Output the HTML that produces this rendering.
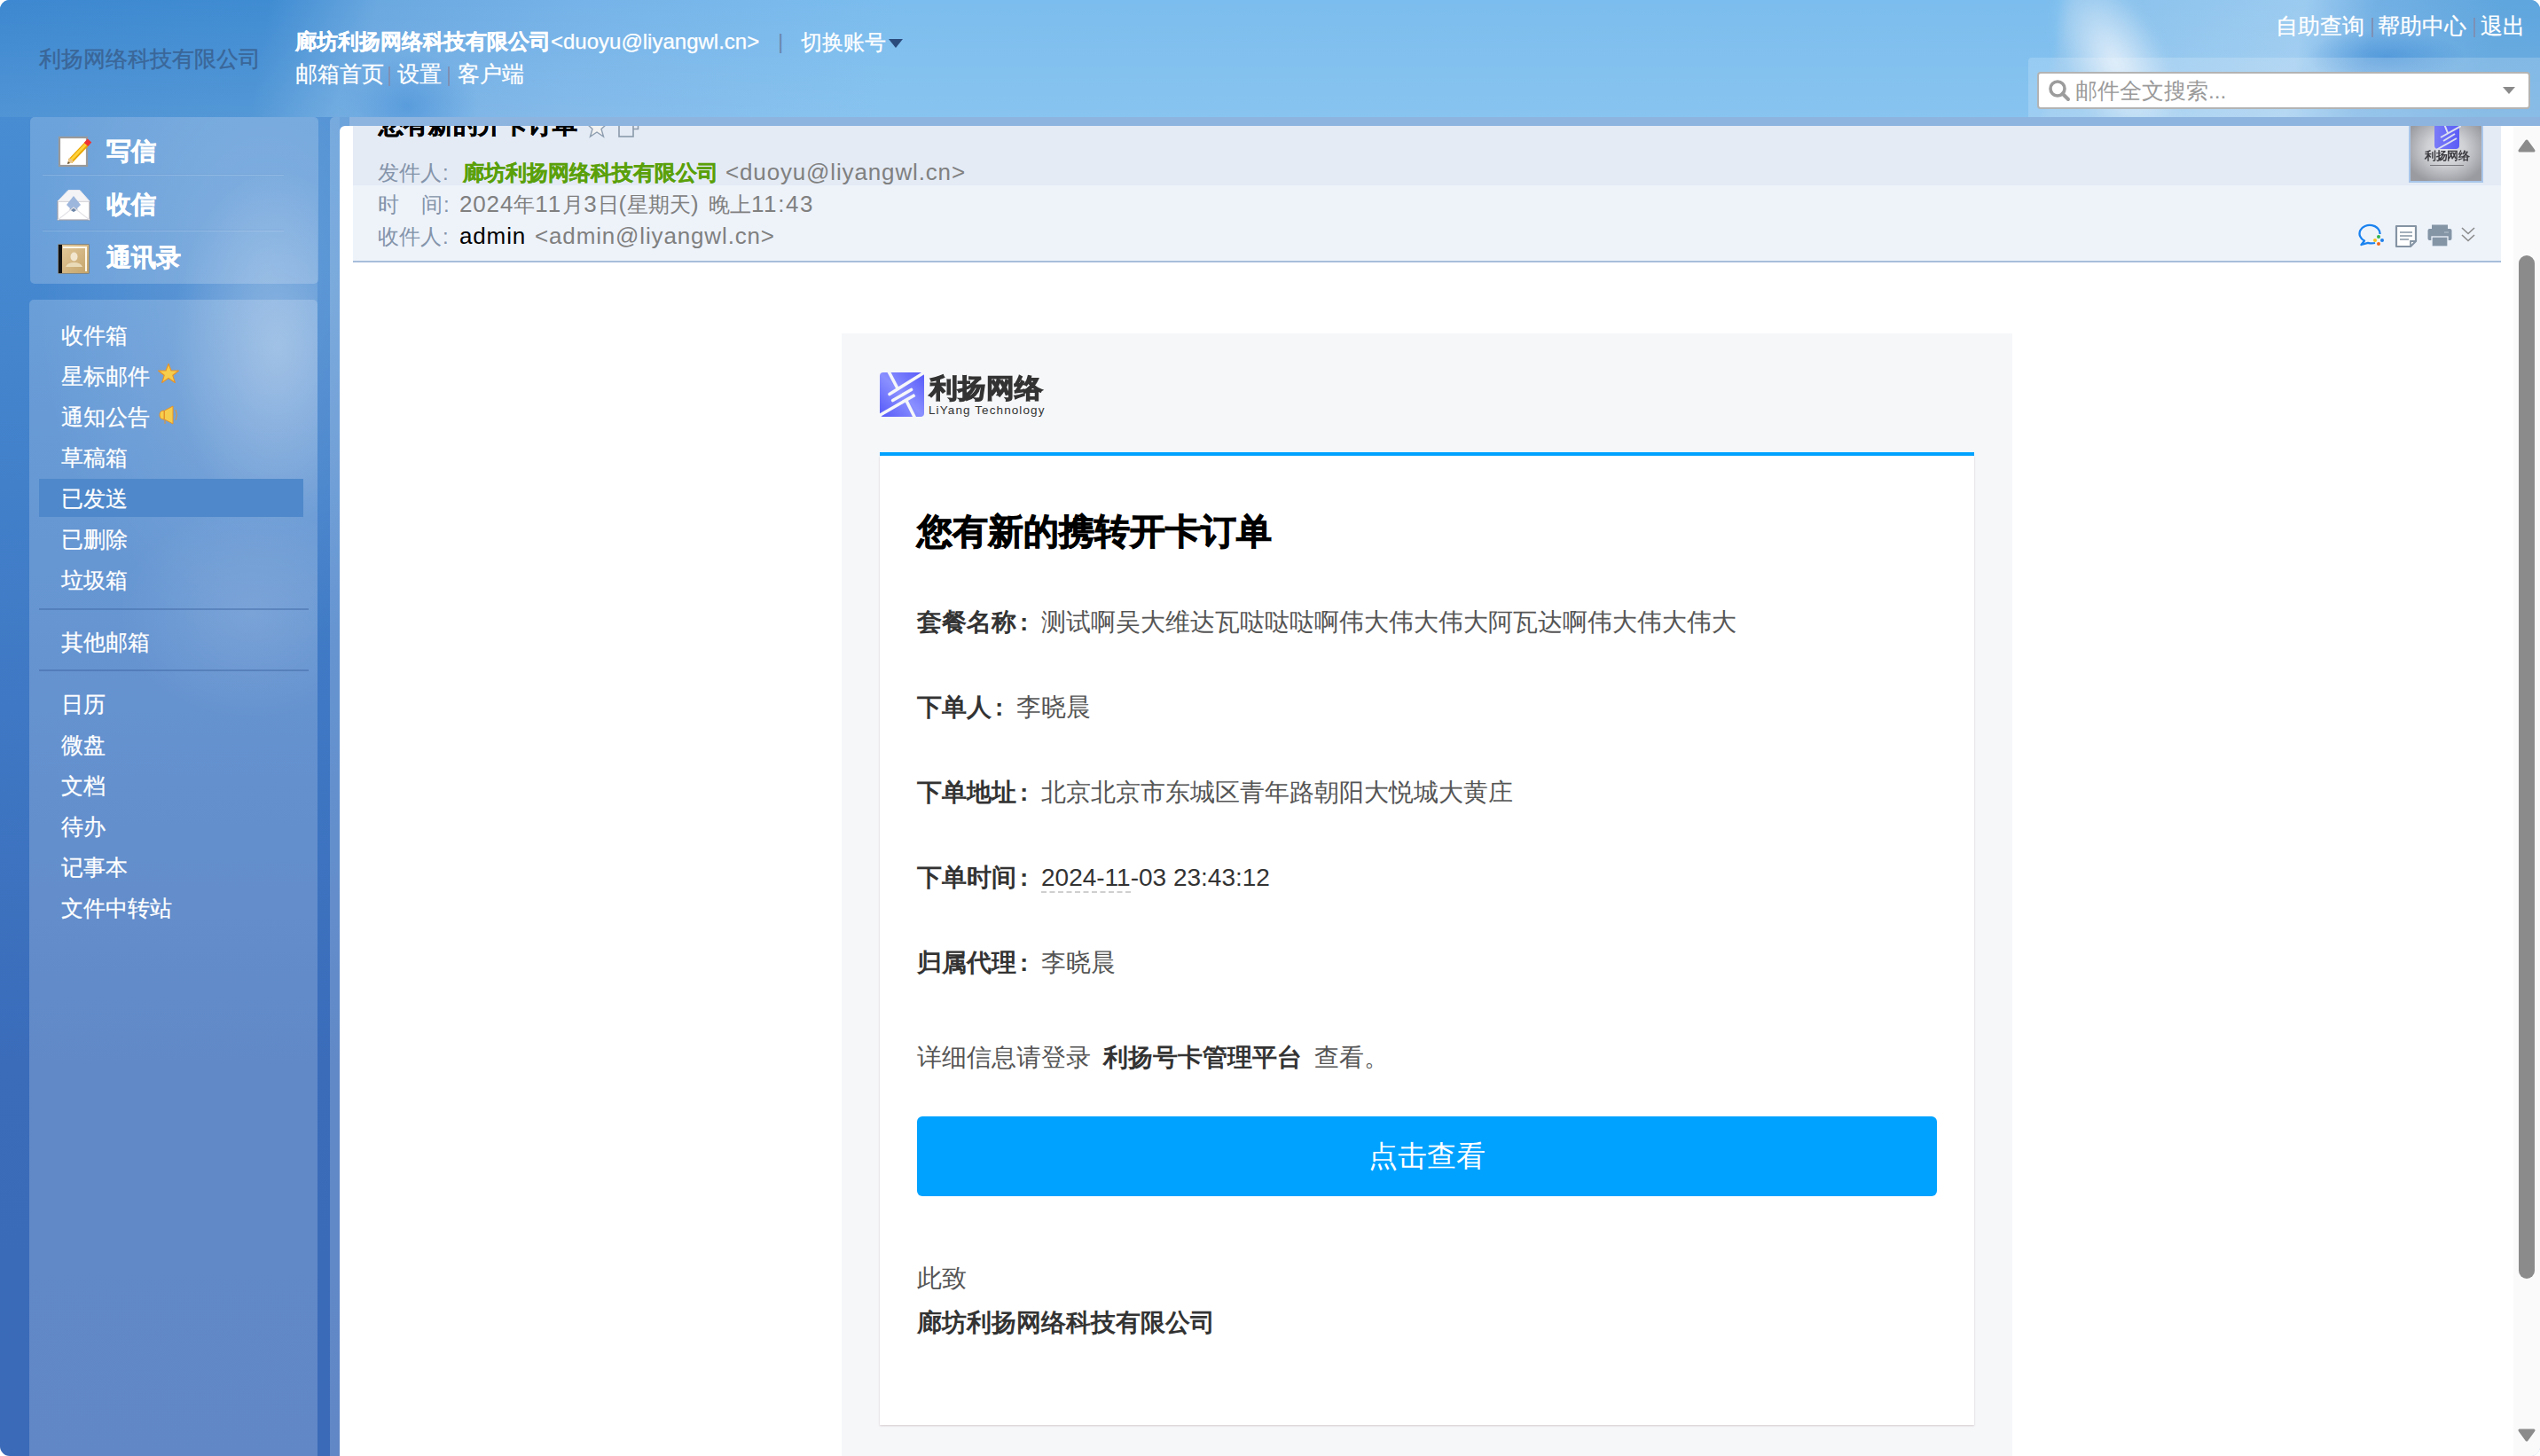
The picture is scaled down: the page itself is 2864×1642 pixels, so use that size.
<!DOCTYPE html>
<html><head><meta charset="utf-8">
<style>
*{margin:0;padding:0;box-sizing:border-box}
html,body{width:2864px;height:1642px;overflow:hidden;background:#fff}
body{font-family:"Liberation Sans",sans-serif;position:relative}
.a{position:absolute;white-space:nowrap}
#app{position:absolute;left:0;top:0;width:2864px;height:1642px;border-radius:11px;overflow:hidden;
 background:linear-gradient(180deg,#4a8fd4 0px,#4588d0 300px,#3f78c4 800px,#3a6cba 1200px,#3a6ab8 1642px)}
#hdr{position:absolute;left:0;top:0;width:2864px;height:132px;overflow:hidden;
 background:
  radial-gradient(ellipse 90px 30px at 2690px 64px,rgba(50,130,210,0.5),rgba(50,130,210,0) 100%),
  radial-gradient(ellipse 80px 60px at 460px 120px,rgba(50,130,210,0.45),rgba(50,130,210,0) 100%),
  linear-gradient(180deg,rgba(255,255,255,0) 0px,rgba(255,255,255,0.1) 132px),
  linear-gradient(100deg,#3d88d0 0px,#408cd2 300px,#6aa8e0 420px,#76b3e8 650px,#7bbdee 1000px,#7bbdee 2288px,#86c0ec 2300px,#9ccbf0 2560px,#72b0e4 2640px,#5fa6de 2780px,#5fa6df 2864px)}
#streak{position:absolute;left:2330px;top:-40px;width:110px;height:220px;transform:rotate(-28deg);
 background:radial-gradient(ellipse 50% 50% at 50% 50%,rgba(225,238,250,0.95),rgba(225,238,250,0) 100%);filter:blur(6px)}
.t24{font-size:24.5px;line-height:24px}
.t28{font-size:28px;line-height:28px}
.w{color:#fff;-webkit-text-stroke:0.25px #fff}
.sep{color:#86a6cc}
.v{font-size:26px;line-height:1px;letter-spacing:0.85px}
.c{display:inline-block;width:24px;padding-left:1px}
.c2{display:inline-block;width:28px;padding-left:4px}
</style></head><body>
<div id="app">
 <div id="hdr"><div id="streak"></div></div>
 <!-- header texts -->
 <div class="a t24" style="left:44px;top:55px;color:#3a6698;-webkit-text-stroke:0.35px #3a6698">利扬网络科技有限公司</div>
 <div class="a t24 w" style="left:333px;top:35px;font-size:24px"><b style="-webkit-text-stroke:0.3px #fff">廊坊利扬网络科技有限公司</b>&lt;duoyu@liyangwl.cn&gt;</div>
 <div class="a t24" style="left:877px;top:35px;color:#6a88b0">|</div>
 <div class="a t24 w" style="left:903px;top:36px;font-size:24px">切换账号</div>
 <div class="a" style="left:1002px;top:44px;width:0;height:0;border-left:8.5px solid transparent;border-right:8.5px solid transparent;border-top:10px solid #2b4b7c"></div>
 <div class="a t24 w" style="left:333px;top:72px">邮箱首页</div>
 <div class="a" style="left:438px;top:75px;width:2px;height:22px;background:#7d90b5"></div>
 <div class="a t24 w" style="left:448px;top:72px">设置</div>
 <div class="a" style="left:505px;top:75px;width:2px;height:22px;background:#7d90b5"></div>
 <div class="a t24 w" style="left:516px;top:72px">客户端</div>
 <div class="a t24 w" style="left:2566px;top:18px">自助查询</div>
 <div class="a" style="left:2674px;top:20px;width:2px;height:22px;background:#7d90b5"></div>
 <div class="a t24 w" style="left:2681px;top:18px">帮助中心</div>
 <div class="a" style="left:2789px;top:20px;width:2px;height:22px;background:#7d90b5"></div>
 <div class="a t24 w" style="left:2797px;top:18px">退出</div>
 <!-- search -->
 <div class="a" style="left:2287px;top:65px;width:577px;height:67px;background:rgba(255,255,255,0.18);border-radius:4px 0 0 0"></div>
 <div class="a" style="left:2297px;top:81px;width:556px;height:42px;background:#fff;border:2px solid #b3b3b3;border-radius:4px"></div>
 <div class="a t24" style="left:2340px;top:91px;color:#9a9a9a">邮件全文搜索...</div>

 <!-- sidebar -->
 <div class="a" style="left:0;top:132px;width:383px;height:800px;background:radial-gradient(ellipse 260px 420px at 300px 180px,rgba(255,255,255,0.16),rgba(255,255,255,0) 100%)"></div>
 <div class="a" style="left:34px;top:132px;width:325px;height:188px;background:rgba(255,255,255,0.2);border-radius:5px"></div>
 <div class="a" style="left:33px;top:338px;width:325px;height:1320px;background:rgba(255,255,255,0.2);border-radius:5px"></div>
 <div class="a" style="left:33px;top:132px;width:325px;height:800px;background:radial-gradient(ellipse 120px 200px at 280px 260px,rgba(255,255,255,0.28),rgba(255,255,255,0) 100%),radial-gradient(ellipse 150px 120px at 250px 560px,rgba(255,255,255,0.12),rgba(255,255,255,0) 100%)"></div>
 <div class="a" style="left:48px;top:196px;width:272px;height:1px;background:rgba(60,110,180,0.12)"></div>
 <div class="a" style="left:48px;top:197px;width:272px;height:1px;background:rgba(255,255,255,0.18)"></div>
 <div class="a" style="left:48px;top:259px;width:272px;height:1px;background:rgba(60,110,180,0.12)"></div>
 <div class="a" style="left:48px;top:260px;width:272px;height:1px;background:rgba(255,255,255,0.18)"></div>
 <div class="a" style="left:120px;top:157px;font-size:28px;line-height:28px;font-weight:bold;color:#fff;-webkit-text-stroke:0.5px #fff">写信</div>
 <div class="a" style="left:120px;top:217px;font-size:28px;line-height:28px;font-weight:bold;color:#fff;-webkit-text-stroke:0.5px #fff">收信</div>
 <div class="a" style="left:120px;top:277px;font-size:28px;line-height:28px;font-weight:bold;color:#fff;-webkit-text-stroke:0.5px #fff">通讯录</div>

 <div class="a" style="left:44px;top:540px;width:298px;height:43px;background:#4f89cb"></div>
 <div class="a" style="left:44px;top:686px;width:304px;height:2px;background:rgba(60,100,160,0.45)"></div>
 <div class="a" style="left:44px;top:755px;width:304px;height:2px;background:rgba(60,100,160,0.45)"></div>
 <div class="a t24 w" style="left:69px;top:367px">收件箱</div>
 <div class="a t24 w" style="left:69px;top:413px">星标邮件</div>
 <div class="a t24 w" style="left:69px;top:459px">通知公告</div>
 <div class="a t24 w" style="left:69px;top:505px">草稿箱</div>
 <div class="a t24 w" style="left:69px;top:551px">已发送</div>
 <div class="a t24 w" style="left:69px;top:597px">已删除</div>
 <div class="a t24 w" style="left:69px;top:643px">垃圾箱</div>
 <div class="a t24 w" style="left:69px;top:713px">其他邮箱</div>
 <div class="a t24 w" style="left:69px;top:783px">日历</div>
 <div class="a t24 w" style="left:69px;top:829px">微盘</div>
 <div class="a t24 w" style="left:69px;top:875px">文档</div>
 <div class="a t24 w" style="left:69px;top:921px">待办</div>
 <div class="a t24 w" style="left:69px;top:967px">记事本</div>
 <div class="a t24 w" style="left:69px;top:1013px">文件中转站</div>

 <!-- main frame -->
 <div class="a" style="left:372px;top:132px;width:2492px;height:1510px;background:rgba(255,255,255,0.2);border-radius:5px 0 0 0"></div>
 <div class="a" style="left:383px;top:142px;width:2481px;height:1500px;background:#fff;border-radius:6px 0 0 0"></div>
 <div class="a" style="left:394px;top:132px;width:2470px;height:10px;background:#8cb4df"></div>
 <!-- email header -->
 <div class="a" style="left:398px;top:142px;width:2422px;height:67px;background:#e4ebf5"></div>
 <div class="a" style="left:398px;top:209px;width:2422px;height:85px;background:#eef3fa"></div>
 <div class="a" style="left:398px;top:294px;width:2422px;height:2px;background:#a7bedb"></div>
 <div class="a t24" style="left:426px;top:183px;color:#8494aa;font-size:24px">发件人<span class="c">:</span></div>
 <div class="a t24" style="left:522px;top:183px;color:#5aa00a;font-weight:bold;font-size:24px;-webkit-text-stroke:0.3px #5aa00a">廊坊利扬网络科技有限公司</div>
 <div class="a t24" style="left:818px;top:183px;color:#808080"><span class="v">&lt;duoyu@liyangwl.cn&gt;</span></div>
 <div class="a t24" style="left:426px;top:219px;color:#8494aa;font-size:24px">时<span style="display:inline-block;width:25px"></span>间<span class="c">:</span></div>
 <div class="a t24" style="left:518px;top:219px;color:#808080;font-size:24px"><span class="v">2024</span>年<span class="v" style="letter-spacing:2px">11</span>月<span class="v">3</span>日<span class="v">(</span>星期天<span class="v" style="letter-spacing:2px">) </span>晚上<span class="v" style="letter-spacing:1.6px">11:43</span></div>
 <div class="a t24" style="left:426px;top:255px;color:#8494aa;font-size:24px">收件人<span class="c">:</span></div>
 <div class="a t24" style="left:518px;top:255px;color:#000"><span class="v">admin</span></div>
 <div class="a t24" style="left:603px;top:255px;color:#808080"><span class="v">&lt;admin@liyangwl.cn&gt;</span></div>

 <!-- scrollbar -->
 <div class="a" style="left:2834px;top:142px;width:30px;height:1500px;background:#fafafa"></div>
 <div class="a" style="left:2840px;top:288px;width:18px;height:1154px;background:#8b8b8b;border-radius:9px"></div>

 <!-- email body -->
 <div class="a" style="left:949px;top:376px;width:1320px;height:1300px;background:#f6f7f9"></div>
 <div class="a" style="left:992px;top:510px;width:1234px;height:4px;background:#00a2ff"></div>
 <div class="a" style="left:992px;top:514px;width:1234px;height:1093px;background:#fff;box-shadow:0 1px 2px rgba(150,120,130,0.35)"></div>
 <div class="a" style="left:1034px;top:579px;font-size:40px;line-height:40px;font-weight:bold;color:#000;-webkit-text-stroke:0.9px #000">您有新的携转开卡订单</div>
 <div class="a t28" style="left:1034px;top:688px;color:#555"><b style="color:#333">套餐名称<span class="c2">:</span></b>测试啊吴大维达瓦哒哒哒啊伟大伟大伟大阿瓦达啊伟大伟大伟大</div>
 <div class="a t28" style="left:1034px;top:784px;color:#555"><b style="color:#333">下单人<span class="c2">:</span></b>李晓晨</div>
 <div class="a t28" style="left:1034px;top:880px;color:#555"><b style="color:#333">下单地址<span class="c2">:</span></b>北京北京市东城区青年路朝阳大悦城大黄庄</div>
 <div class="a t28" style="left:1034px;top:976px;color:#333"><b style="color:#333">下单时间<span class="c2">:</span></b>2024-11-03 23:43:12</div>
 <div class="a t28" style="left:1034px;top:1072px;color:#555"><b style="color:#333">归属代理<span class="c2">:</span></b>李晓晨</div>
 <div class="a t28" style="left:1034px;top:1179px;color:#555">详细信息请登录<b style="color:#333;margin-left:14px;margin-right:14px">利扬号卡管理平台</b>查看。</div>
 <div class="a" style="left:1034px;top:1259px;width:1150px;height:90px;background:#00a2ff;border-radius:6px"></div>
 <div class="a" style="left:1034px;top:1288px;width:1150px;text-align:center;font-size:32.8px;line-height:32px;color:#fff">点击查看</div>
 <div class="a t28" style="left:1034px;top:1428px;color:#555">此致</div>
 <div class="a t28" style="left:1034px;top:1478px;color:#333;font-weight:bold">廊坊利扬网络科技有限公司</div>
 <!-- ICONS -->
 <svg class="a" style="left:64px;top:152px" width="40" height="38" viewBox="0 0 40 38">
  <rect x="3" y="3" width="31" height="32" fill="#fff" stroke="#9a9a9a" stroke-width="2.2"/>
  <line x1="15" y1="30" x2="35" y2="9" stroke="#e9a400" stroke-width="6" stroke-linecap="butt"/>
  <line x1="15.5" y1="29" x2="34" y2="9.5" stroke="#ffd23a" stroke-width="3"/>
  <line x1="33" y1="11" x2="37" y2="6.5" stroke="#e33" stroke-width="6"/>
  <polygon points="12,33 14,25.5 19.5,30.5" fill="#e8c48a"/>
  <polygon points="12,33 12.8,30 15,32" fill="#5a4a30"/>
 </svg>
 <svg class="a" style="left:63px;top:212px" width="40" height="38" viewBox="0 0 40 38">
  <rect x="2" y="15" width="36" height="21" fill="#fff" stroke="#a0a0a8" stroke-width="1.2"/>
  <polygon points="2,15 14,2.5 27,2.5 38,15" fill="#f4f4f6" stroke="#e8e8ee" stroke-width="1"/>
  <polygon points="20,9 28,19 20,27 12,19" fill="#9db6dc"/>
  <polygon points="20,22 25,24 20,27 15,24" fill="#7088a8"/>
  <polyline points="2,36 20,22 38,36" fill="none" stroke="#e4e4e8" stroke-width="1.2"/>
 </svg>
 <svg class="a" style="left:65px;top:275px" width="36" height="34" viewBox="0 0 36 34">
  <rect x="1" y="1" width="34" height="32" fill="#c9a870" stroke="#8a6a3c" stroke-width="1"/>
  <rect x="1" y="1" width="4" height="32" fill="#111"/>
  <rect x="5" y="1" width="30" height="32" fill="url(#bk)"/>
  <polyline points="6,4 32,4 32,31" fill="none" stroke="#fff8ea" stroke-width="2"/>
  <ellipse cx="18.5" cy="14.5" rx="4" ry="5" fill="#f2e6cf"/>
  <path d="M9,26 Q11,21 18.5,21 Q26,21 28,26 Z" fill="#eadbb8"/>
  <defs><linearGradient id="bk" x1="0" y1="0" x2="1" y2="1"><stop offset="0" stop-color="#e2c89a"/><stop offset="1" stop-color="#c4a46a"/></linearGradient></defs>
 </svg>
 <svg class="a" style="left:177px;top:409px" width="26" height="24" viewBox="0 0 26 24">
  <polygon points="13,1.2 16,9 24.5,9 17.8,14.3 20.3,22.5 13,17.5 5.7,22.5 8.2,14.3 1.5,9 10,9" fill="#f6cd4c" stroke="#e6922a" stroke-width="1.1" stroke-linejoin="round"/>
 </svg>
 <svg class="a" style="left:179px;top:457px" width="24" height="23" viewBox="0 0 24 23">
  <path d="M6,6 L6,16 Q1,16 1,11 Q1,6 6,6 Z" fill="#f6cd4c" stroke="#e6922a" stroke-width="1"/>
  <path d="M6.5,6 L16,1 L16,21 L6.5,16 Z" fill="#f6cd4c" stroke="#e6922a" stroke-width="1"/>
  <line x1="7" y1="16" x2="7" y2="21" stroke="#e6922a" stroke-width="1"/>
  <path d="M19,5 Q22,11 19,17" fill="none" stroke="#e6922a" stroke-width="1"/>
 </svg>
 <!-- search icon + dropdown -->
 <svg class="a" style="left:2308px;top:88px" width="28" height="28" viewBox="0 0 28 28">
  <circle cx="12" cy="12" r="8" fill="none" stroke="#9c9c9c" stroke-width="3.6"/>
  <line x1="17.5" y1="17.5" x2="24" y2="24" stroke="#9c9c9c" stroke-width="4" stroke-linecap="round"/>
 </svg>
 <div class="a" style="left:2822px;top:98px;width:0;height:0;border-left:7px solid transparent;border-right:7px solid transparent;border-top:8px solid #8a8a8a"></div>
 <!-- title (clipped) -->
 <div class="a" style="left:398px;top:142px;width:400px;height:14px;overflow:hidden">
  <div class="a" style="left:29px;top:-15px;font-size:28px;line-height:28px;font-weight:bold;color:#000;-webkit-text-stroke:0.5px #000">您有新的开卡订单</div>
 </div>
 <svg class="a" style="left:662px;top:142px" width="60" height="14" viewBox="0 0 60 14">
  <polygon points="11,-10 14,-2 22,-2 16,3.5 18.5,12 11,7 3.5,12 6,3.5 0,-2 8,-2" fill="#f2f2f2" stroke="#8e9eb0" stroke-width="1.4"/>
  <rect x="36" y="-6" width="16" height="18" fill="none" stroke="#8a9aab" stroke-width="1.6"/>
  <polyline points="52,3.5 57.5,3.5 57.5,-2" fill="none" stroke="#8a9aab" stroke-width="1.6"/>
 </svg>
 <!-- avatar -->
 <div class="a" style="left:2716px;top:142px;width:84px;height:64px;border:2px solid #a9c6ea;border-top:none;background:radial-gradient(ellipse 60% 65% at 50% 42%,#e4e5e8 0%,#cfd0d4 45%,#9a9ba1 100%);overflow:hidden">
  <svg class="a" style="left:25px;top:0px" width="32" height="27" viewBox="0 0 32 27">
   <defs><linearGradient id="avg" x1="0" y1="0" x2="1" y2="0"><stop offset="0" stop-color="#7a7cf8"/><stop offset="1" stop-color="#5a5cf6"/></linearGradient></defs>
   <path d="M2,-4 L30,-4 L30,22 Q30,26 26,26 L6,26 Q2,26 2,22 Z" fill="url(#avg)" style="filter:blur(0.4px)"/>
   <line x1="32" y1="0" x2="9" y2="13" stroke="#dcdff0" stroke-width="2"/>
   <line x1="25" y1="9" x2="12" y2="17" stroke="#dcdff0" stroke-width="2"/>
   <line x1="27" y1="14" x2="4" y2="27" stroke="#dcdff0" stroke-width="2"/>
   <line x1="13" y1="-2" x2="17" y2="8" stroke="#dcdff0" stroke-width="2"/>
  </svg>
  <div class="a" style="left:16px;top:28px;font-size:12.5px;line-height:13px;font-weight:900;color:#3c3c40;filter:blur(0.7px);letter-spacing:-0.5px">利扬网络</div>
  <div class="a" style="left:22px;top:44px;width:38px;height:1px;background:#7a7a80;filter:blur(0.4px)"></div>
 </div>
 <!-- action icons -->
 <svg class="a" style="left:2658px;top:251px" width="36" height="30" viewBox="0 0 36 30">
  <path d="M25.5,13 A11.5,9.5 0 1 0 8,20.5 L4.5,25 L12,22.8 A13,11 0 0 0 20,23" fill="none" stroke="#1a82ef" stroke-width="2.3" stroke-linejoin="round"/>
  <circle cx="24" cy="16" r="2" fill="#33b44a"/><circle cx="28" cy="20" r="2" fill="#1e7fe8"/>
  <circle cx="24" cy="24" r="2" fill="#f06a1c"/><circle cx="20" cy="20" r="2" fill="#f7c21b"/>
 </svg>
 <svg class="a" style="left:2700px;top:253px" width="27" height="27" viewBox="0 0 27 27">
  <path d="M2,2 H24 V19 L18,25 H2 Z" fill="#fff" stroke="#8594a4" stroke-width="2.2" stroke-linejoin="round"/>
  <path d="M18,25 V19 H24" fill="none" stroke="#8594a4" stroke-width="1.8"/>
  <line x1="6" y1="9" x2="20" y2="9" stroke="#8594a4" stroke-width="1.5"/>
  <line x1="6" y1="13" x2="20" y2="13" stroke="#8594a4" stroke-width="1.5"/>
  <line x1="6" y1="17" x2="16" y2="17" stroke="#8594a4" stroke-width="1.5"/>
 </svg>
 <svg class="a" style="left:2737px;top:253px" width="28" height="26" viewBox="0 0 28 26">
  <rect x="5" y="0.5" width="18" height="5" fill="#8495a6"/>
  <rect x="0.5" y="5" width="27" height="13" rx="2" fill="#8495a6"/>
  <rect x="5" y="14" width="18" height="11" fill="#8495a6" stroke="#eef3fa" stroke-width="1.3"/>
  <line x1="19" y1="9" x2="24" y2="9" stroke="#b8c4d0" stroke-width="1"/>
 </svg>
 <svg class="a" style="left:2774px;top:255px" width="18" height="20" viewBox="0 0 18 20">
  <polyline points="2,2 9,8.5 16,2" fill="none" stroke="#8a8a8a" stroke-width="1.6"/>
  <polyline points="2,10 9,16.5 16,10" fill="none" stroke="#8a8a8a" stroke-width="1.6"/>
 </svg>
 <!-- scrollbar arrows -->
 <svg class="a" style="left:2838px;top:156px" width="22" height="18" viewBox="0 0 22 18"><polygon points="11,3 19,14 3,14" fill="#8b8b8b" stroke="#8b8b8b" stroke-width="3" stroke-linejoin="round"/></svg>
 <svg class="a" style="left:2838px;top:1610px" width="22" height="18" viewBox="0 0 22 18"><polygon points="3,3 19,3 11,14" fill="#8b8b8b" stroke="#8b8b8b" stroke-width="3" stroke-linejoin="round"/></svg>
 <!-- logo -->
 <svg class="a" style="left:992px;top:420px" width="50" height="50" viewBox="0 0 50 50">
  <defs><linearGradient id="lg" x1="0" y1="1" x2="1" y2="0"><stop offset="0" stop-color="#5558f8"/><stop offset="0.5" stop-color="#8a90ff"/><stop offset="1" stop-color="#5558f8"/></linearGradient></defs>
  <rect x="0" y="0" width="50" height="50" rx="4" fill="url(#lg)"/>
  <g stroke="#f6f7f9" stroke-width="3.6">
   <line x1="52" y1="-1" x2="11" y2="24.5" stroke-linecap="round"/>
   <line x1="35.5" y1="19.5" x2="14.7" y2="31.5" stroke-linecap="round"/>
   <line x1="39.5" y1="25.5" x2="-3" y2="50"/>
   <line x1="9.5" y1="-2" x2="20" y2="18"/>
   <line x1="30" y1="32" x2="40" y2="52"/>
  </g>
 </svg>
 <div class="a" style="left:1047.5px;top:422.5px;font-size:32px;line-height:32px;font-weight:900;color:#333;letter-spacing:0px;-webkit-text-stroke:1.2px #333;transform:scaleY(0.94);transform-origin:0 0">利扬网络</div>
 <div class="a" style="left:1047px;top:456px;font-size:13.5px;line-height:14px;color:#333;letter-spacing:1.1px">LiYang Technology</div>
 <!-- dashed underline -->
 <div class="a" style="left:1174px;top:1005px;width:101px;height:0;border-top:2px dashed #cfcfcf"></div>
</div>
</body></html>
